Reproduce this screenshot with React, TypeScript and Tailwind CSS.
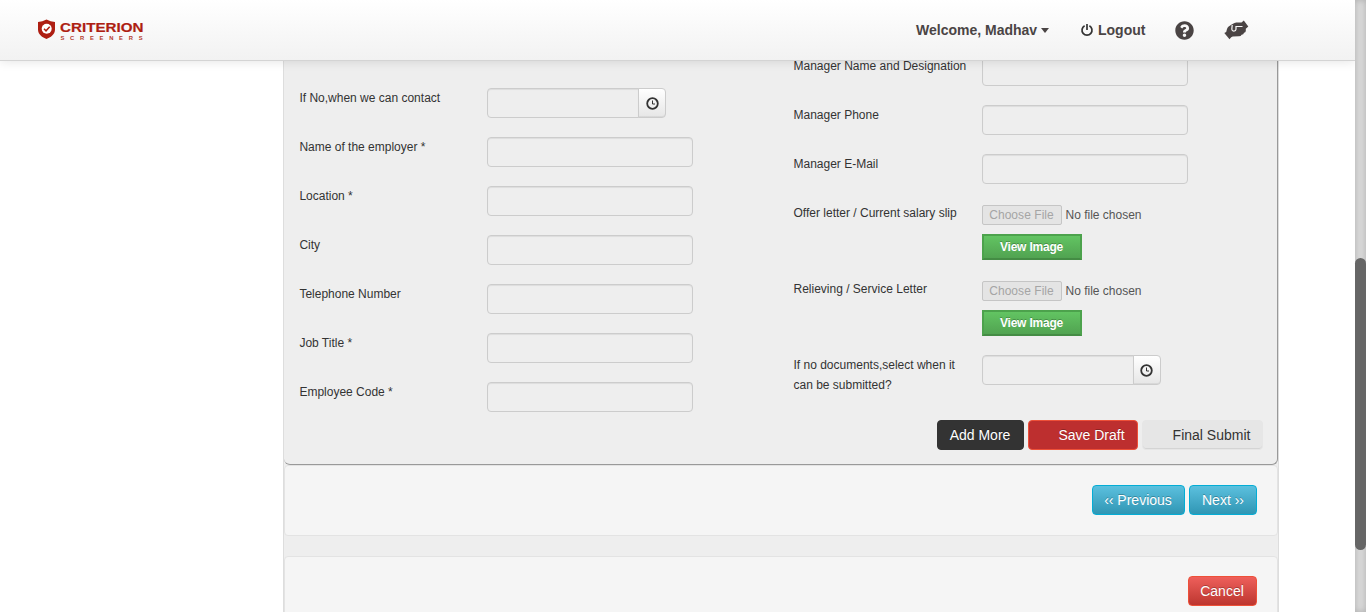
import type { ReactNode } from 'react';
import { FaQuestionCircle } from 'react-icons/fa';

function Clock() {
  return (
    <svg className="h-[13px] w-[13px]" viewBox="0 0 13 13" fill="none" stroke="#333">
      <circle cx="6.500" cy="6.500" r="5.300" strokeWidth="1.800" />
      <path d="M6.500 3.500v3.500H9" strokeWidth="1" />
    </svg>
  );
}

function Hands() {
  return (
    <svg className="ml-[30px] h-5 w-[25px]" viewBox="0 0 25 20">
      <path
        d="M.3 12.900 2.200 12 3 9C3.800 7 5.200 6 7.200 4.800L10.500 3Q11.500 2.400 13 2.600L17.500 2.600 19.800.5 24.300 6.500 21.800 8.700V11Q21.600 12.600 20 12.800 19.700 14.600 17.600 14.800 16.800 16.400 14.800 16.300L8.700 16.400 7.200 17.300 5.500 19.300Z"
        fill="#4a4444"
      />
      <path d="M8.200 5 7.800 9.300Q8 11.200 9.800 11.200 11.900 11 12 9.300V6.500H18.500" fill="none" stroke="#f7f7f7" strokeWidth="1.200" />
    </svg>
  );
}

function TextInput() {
  return (
    <input
      disabled
      className="block h-[30px] w-[206px] rounded border border-[#ccc] bg-[#eee] shadow-[inset_0_1px_1px_rgba(0,0,0,0.075)]"
    />
  );
}

function DateInput() {
  return (
    <div className="flex h-[30px] w-[179px]">
      <input
        disabled
        className="block w-[152px] rounded-l border border-[#ccc] bg-[#eee] shadow-[inset_0_1px_1px_rgba(0,0,0,0.075)]"
      />
      <button className="-ml-px flex w-7 items-center justify-center rounded-r border border-[#ccc] bg-linear-to-b from-white to-[#e6e6e6] shadow-[inset_0_-1px_0_rgba(0,0,0,0.06)]">
        <Clock />
      </button>
    </div>
  );
}

function FileInput() {
  return (
    <div className="pt-0.5">
      <div className="flex h-5 items-center">
        <button className="h-5 w-20 rounded-[2px] border border-[#c5c5c5] bg-[#e4e4e4] text-[12px] leading-[18px] tracking-[0.05px] text-[#a5a5a5]">
          Choose File
        </button>
        <span className="ml-1 text-[#555]">No file chosen</span>
      </div>
      <button className="mt-[9px] block h-[26px] w-[100px] border-2 border-[#4ca24c] border-b-[#448c44] bg-linear-to-b from-[#62c462] to-[#51a351] text-[12px] leading-[21px] font-bold tracking-[-0.2px] text-white [text-shadow:0_-1px_0_rgba(0,0,0,0.25)]">
        View Image
      </button>
    </div>
  );
}

function Row({ label, tall, children }: { label: string; tall?: boolean; children: ReactNode }) {
  return (
    <div className={tall ? 'flex h-[76px] items-start' : 'flex h-[49px] items-start'}>
      <div className="w-[188px] shrink-0 pr-3 leading-5 text-[#333]">{label}</div>
      {children}
    </div>
  );
}

const employerFields = [
  'Name of the employer *',
  'Location *',
  'City',
  'Telephone Number',
  'Job Title *',
  'Employee Code *',
];

const button = 'h-[30px] rounded border text-[14px] leading-5';
const lightText = 'text-white [text-shadow:0_-1px_0_rgba(0,0,0,0.25)]';

export default function App() {
  return (
    <div className="flex h-[612px] w-[1366px] overflow-hidden bg-white font-['Liberation_Sans',Arial,sans-serif] text-[12px]">
      <div className="flex w-[1355px] flex-col overflow-hidden">
        <header className="relative z-10 flex h-[61px] shrink-0 items-center border-b border-[#d4d4d4] bg-linear-to-b from-white to-[#f2f2f2] text-[14px] font-bold text-[#4a4444] shadow-[0_1px_10px_rgba(0,0,0,0.1)]">
          <svg className="ml-9 h-7 w-[112px]" viewBox="0 0 112 28">
            <path d="M10.500 3.500Q14.500 5.500 19 6v7.500c0 5-4.500 8-8.500 9.500C6.500 21.500 2 18.500 2 13.500V6Q6.500 5.500 10.500 3.500z" fill="#ae1e12" />
            <circle cx="10.700" cy="12.700" r="5" fill="#fff" />
            <path d="m8 12.800 2 2 3.700-4" fill="none" stroke="#ae1e12" strokeWidth="1.500" />
            <text x="24" y="15.800" textLength="83.500" lengthAdjust="spacingAndGlyphs" fontSize="12.500" fontWeight="bold" fill="#ae1e12" stroke="#ae1e12" strokeWidth="0.200">CRITERION</text>
            <text x="24.500" y="24" textLength="82" fontSize="5.800" fill="#b53b30">SCREENERS</text>
          </svg>
          <div className="ml-[768px] flex w-[164px] items-center">
            Welcome, Madhav
            <span className="ml-1 border-x-[4.500px] border-t-[5px] border-x-transparent border-t-[#4a4444]" />
          </div>
          <div className="flex w-[95px] items-center">
            <svg className="mr-1 h-[14px] w-[14px]" viewBox="0 0 14 14" fill="none" stroke="#333" strokeWidth="1.700">
              <path d="M4.600 2.800a5 5 0 1 0 4.800 0M7 1v6" />
            </svg>
            Logout
          </div>
          <FaQuestionCircle className="h-[19px] w-[19px]" />
          <Hands />
        </header>

        <main className="ml-[283px] flex h-[551px] w-[996px] flex-col border-x border-[#ddd] bg-[#eee]">
          <section className="h-[404px] shrink-0 rounded-b-md border-r border-b border-[#999]">
            <div className="flex h-[359px] pl-[15px]">
              <div className="w-[494px] pt-[27px] pl-[0.400px]">
                <Row label="If No,when we can contact">
                  <DateInput />
                </Row>
                {employerFields.map((label) => (
                  <Row key={label} label={label}>
                    <TextInput />
                  </Row>
                ))}
              </div>
              <div className="-mt-[5px] pl-[0.500px]">
                <Row label="Manager Name and Designation">
                  <TextInput />
                </Row>
                <Row label="Manager Phone">
                  <TextInput />
                </Row>
                <Row label="Manager E-Mail">
                  <TextInput />
                </Row>
                <Row label="Offer letter / Current salary slip" tall>
                  <FileInput />
                </Row>
                <Row label="Relieving / Service Letter" tall>
                  <FileInput />
                </Row>
                <Row label="If no documents,select when it can be submitted?">
                  <DateInput />
                </Row>
              </div>
            </div>
            <div className="flex justify-end gap-1 pr-[14px]">
              <button className={`${button} ${lightText} w-[87px] border-[#333] bg-[#333] pr-px`}>Add More</button>
              <button className={`${button} ${lightText} w-[110px] border-[#ee5038] bg-[#bd2f2f] pl-[17px]`}>Save Draft</button>
              <button className={`${button} w-[121px] border-[#e6e6e6] bg-[#e6e6e6] pl-[18px] text-[#333] shadow-[inset_0_-1px_0_rgba(0,0,0,0.08)]`}>Final Submit</button>
            </div>
          </section>

          <section className="flex h-[71px] shrink-0 justify-end gap-1 rounded border border-[#e3e3e3] bg-[#f5f5f5] pt-[19px] pr-5">
            <button className={`${button} ${lightText} w-[93px] border-[#04add5] bg-linear-to-b from-[#5bc0de] to-[#2f96b4] pr-px`}>‹‹ Previous</button>
            <button className={`${button} ${lightText} w-[68px] border-[#04add5] bg-linear-to-b from-[#5bc0de] to-[#2f96b4]`}>Next ››</button>
          </section>

          <section className="mt-5 flex h-[80px] shrink-0 justify-end rounded border border-[#e3e3e3] bg-[#f5f5f5] pt-[19px] pr-5">
            <button className={`${button} ${lightText} w-[69px] border-[#ee5038] bg-linear-to-b from-[#ee5f5b] to-[#bd362f] pr-px`}>Cancel</button>
          </section>
        </main>
      </div>

      <div className="w-[11px] bg-[#d9d9d9] pt-[258px] shadow-[inset_0_0_6px_rgba(0,0,0,0.2)]">
        <div className="h-[292px] rounded-full bg-[#666]" />
      </div>
    </div>
  );
}
